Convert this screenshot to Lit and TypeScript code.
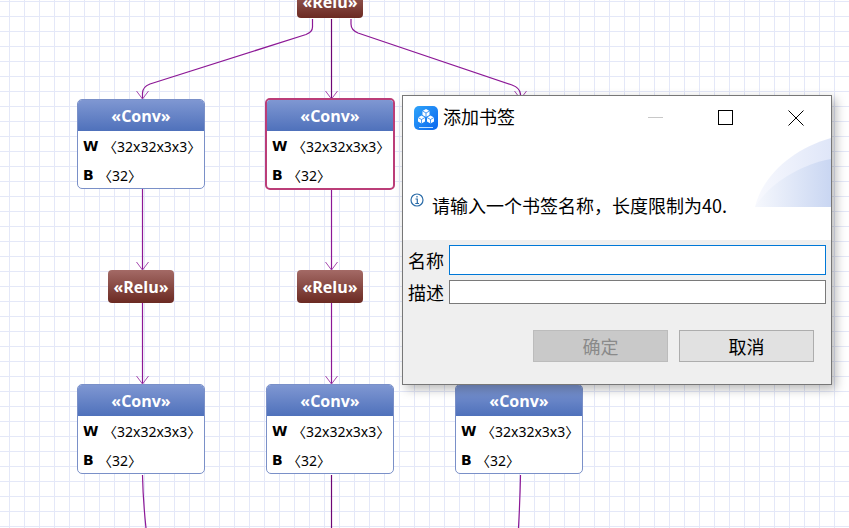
import { LitElement, html, css, svg } from "lit";
import { customElement } from "lit/decorators.js";

const convs = [
  { x: 77, y: 99, sel: false },
  { x: 266, y: 99, sel: true },
  { x: 77, y: 384, sel: false },
  { x: 266, y: 384, sel: false },
  { x: 455, y: 384, sel: false },
];
const relus = [
  { x: 297, y: -15 },
  { x: 108, y: 270 },
  { x: 297, y: 270 },
];
const edges = [
  "M312.5 19V27Q312.5 32 306 34.5L150 84Q142.5 87 142.5 93V99",
  "M351 19V24Q351 30 358 33L512 85Q520 88 520.500 94V99",
  "M142.500 189V270",
  "M142.500 303V384",
  "M331.500 303V384",
  "M331.500 189V270",
  "M142.500 475Q143 500 146 528",
  "M520.500 475Q520 500 518.500 528",
];
const darkEdges = ["M331.500 19V99", "M331.500 475V528"];
const arrows: [number, number][] = [
  [142.5, 99], [331.5, 99], [520.5, 99],
  [142.5, 270], [331.5, 270],
  [142.5, 384], [331.5, 384],
];

@customElement("app-root")
export class AppRoot extends LitElement {
  static styles = css`
    :host {
      display: block;
      position: relative;
      width: 849px;
      height: 528px;
      overflow: hidden;
      background-color: #fff;
      background-image:
        linear-gradient(to right, #e4e8f8 0 1.5px, transparent 1.5px),
        linear-gradient(to bottom, #e4e8f8 0 1.5px, transparent 1.5px);
      background-size: 15px 15px;
      background-position: 9px 1px;
      font-family: "Noto Sans CJK SC", sans-serif;
    }
    .edges { position: absolute; inset: 0; }
    .edge { fill: none; stroke: #8c1896; stroke-width: 1.200; }
    .dark { stroke: #6e0676; }
    .arrow { fill: none; stroke: #a548ae; stroke-width: 1; }
    .conv {
      position: absolute;
      box-sizing: border-box;
      width: 128px;
      height: 90px;
      border: 1px solid #7a90c8;
      border-radius: 5px;
      background: #fff;
      overflow: hidden;
    }
    .conv.sel {
      width: 130px;
      height: 92px;
      margin: -1px;
      border: 2px solid #bb3d78;
    }
    .head {
      height: 31px;
      display: flex;
      align-items: center;
      justify-content: center;
      padding-top: 1px;
      box-sizing: border-box;
      background: linear-gradient(#7f97d2, #4f71bb);
      color: #fff;
      font: bold 16px "Open Sans", "DejaVu Sans", sans-serif;
    }
    .row {
      display: flex;
      align-items: center;
      height: 29px;
      padding-left: 5px;
      color: #000;
      font: 14px "Noto Sans", "Noto Sans CJK SC", sans-serif;
    }
    .row b { font: bold 14px "DejaVu Sans", sans-serif; }
    .w { width: 20px; flex: none; }
    .b { width: 15px; flex: none; }
    .relu {
      position: absolute;
      box-sizing: border-box;
      width: 66px;
      height: 33px;
      display: flex;
      align-items: center;
      justify-content: center;
      padding-top: 1px;
      border-radius: 4px;
      background: linear-gradient(#a46a66, #6b2a22);
      color: #fff;
      font: bold 16px "Open Sans", "DejaVu Sans", sans-serif;
    }
    .dialog {
      position: absolute;
      left: 402px;
      top: 95px;
      box-sizing: border-box;
      width: 430px;
      height: 290px;
      border: 1px solid #777;
      background: #efefef;
      box-shadow: 4px 4px 10px rgba(0, 0, 0, 0.28);
      display: flex;
      flex-direction: column;
      color: #000;
      font-size: 18px;
    }
    .top {
      position: relative;
      height: 144px;
      background: #fff;
      flex: none;
      display: flex;
      flex-direction: column;
    }
    .banner { position: absolute; right: 0; top: 42px; }
    .title {
      display: flex;
      align-items: center;
      height: 44px;
      padding-left: 11px;
      gap: 5px;
      line-height: 24px;
    }
    .title span { margin-top: -4px; }
    .logo { display: block; }
    .ctrl { position: absolute; top: 14px; display: block; }
    .c1 { left: 245px; }
    .c2 { left: 315px; }
    .c3 { left: 385px; }
    .msg {
      position: relative;
      display: flex;
      align-items: center;
      margin-top: 52px;
      padding-left: 7px;
      gap: 8px;
      height: 26px;
    }
    .msg svg { margin-top: -10px; flex: none; }
    .form {
      flex: none;
      display: grid;
      grid-template-columns: 36px 377px;
      column-gap: 5px;
      row-gap: 5px;
      padding: 5px 0 0 5px;
    }
    .form label { line-height: 30px; height: 30px; }
    .form label.second { line-height: 24px; height: 24px; }
    .form input {
      box-sizing: border-box;
      margin: 0;
      padding: 0 2px;
      border: 1px solid #7a7a7a;
      background: #fff;
      outline: none;
      width: 377px;
      height: 24px;
      border-radius: 0;
    }
    .form input.focus { border-color: #0078d7; height: 30px; }
    .buttons {
      display: flex;
      justify-content: flex-end;
      gap: 11px;
      padding: 26px 17px 0 0;
    }
    .btn {
      box-sizing: border-box;
      width: 135px;
      height: 32px;
      display: flex;
      align-items: center;
      justify-content: center;
      border: 1px solid #adadad;
      background: #e1e1e1;
      font-size: 18px;
    }
    .btn.off { background: #c9c9c9; border-color: #bcbcbc; color: #8a8a8a; }
  `;

  render() {
    return html`
      <svg class="edges" width="849" height="528">
        ${edges.map((d) => svg`<path class="edge" d=${d} />`)}
        ${darkEdges.map((d) => svg`<path class="edge dark" d=${d} />`)}
        ${arrows.map(([x, y]) => svg`<path class="arrow" d="M${x - 6} ${y - 8}L${x} ${y}L${x + 6} ${y - 8}" />`)}
      </svg>
      ${convs.map(
        (n) => html`
          <div class="conv ${n.sel ? "sel" : ""}" style="left:${n.x}px;top:${n.y}px">
            <div class="head">«Conv»</div>
            <div class="row"><b class="w">W</b><span>〈32x32x3x3〉</span></div>
            <div class="row"><b class="b">B</b><span>〈32〉</span></div>
          </div>
        `
      )}
      ${relus.map((n) => html`<div class="relu" style="left:${n.x}px;top:${n.y}px">«Relu»</div>`)}
      <div class="dialog">
        <div class="top">
          <svg class="banner" width="76" height="69" viewBox="0 0 76 69">
            <defs>
              <linearGradient id="bg1" x1="0" x2="1" y1="0" y2="0">
                <stop offset="0" stop-color="#f8f9fe" />
                <stop offset="1" stop-color="#dfe6f8" />
              </linearGradient>
              <linearGradient id="bg2" x1="0" x2="1" y1="0" y2="0">
                <stop offset="0" stop-color="#f6f8fd" />
                <stop offset="1" stop-color="#c9d6f2" />
              </linearGradient>
            </defs>
            <path d="M0 69C8 36 40 10 76 0V69Z" fill="url(#bg1)" />
            <path d="M0 69C14 46 44 27 76 21V69Z" fill="url(#bg2)" />
          </svg>
          <div class="title">
            <svg class="logo" width="24" height="24" viewBox="0 0 24 24">
              <defs>
                <linearGradient id="lg" x1="0" x2="1" y1="0" y2="1">
                  <stop offset="0" stop-color="#2fa4fa" />
                  <stop offset="1" stop-color="#0a66ee" />
                </linearGradient>
              </defs>
              <rect width="24" height="24" rx="5" fill="url(#lg)" />
              <path d="M12 3l3.500 2v4l-3.500 2-3.500-2V5z" fill="#fff" />
              <path d="M7.500 9.500l3.500 2v4l-3.500 2-3.500-2v-4z" fill="#fff" />
              <path d="M16.500 9.500l3.500 2v4l-3.500 2-3.500-2v-4z" fill="#fff" />
              <path d="M8.500 5l3.500 2 3.500-2M12 7v4M4 11.500l3.500 2 3.500-2M7.500 13.500v4M13 11.500l3.500 2 3.500-2M16.500 13.500v4" fill="none" stroke="#1d80f2" stroke-width="0.800" />
              <path d="M5 21.500H19" stroke="#bfe0ff" stroke-width="1" />
            </svg>
            <span>添加书签</span>
          </div>
          <svg class="ctrl c1" width="16" height="16" viewBox="0 0 16 16"><path d="M0 7.500H15" stroke="#c8c8c8" /></svg>
          <svg class="ctrl c2" width="16" height="16" viewBox="0 0 16 16"><rect x="0.500" y="0.500" width="14" height="14" fill="none" stroke="#000" /></svg>
          <svg class="ctrl c3" width="16" height="16" viewBox="0 0 16 16"><path d="M0.500 0.500L15.500 15.500M15.500 0.500L0.500 15.500" stroke="#000" /></svg>
          <div class="msg">
            <svg width="14" height="14" viewBox="0 0 14 14">
              <circle cx="7" cy="7" r="6" fill="none" stroke="#2b6ca8" stroke-width="1.200" />
              <path d="M7 3v1.500M5.500 6H7.300V10.500M5.300 10.500H9" fill="none" stroke="#2b6ca8" stroke-width="1.200" />
            </svg>
            <span>请输入一个书签名称，长度限制为40.</span>
          </div>
        </div>
        <div class="form">
          <label>名称</label><input class="focus" />
          <label class="second">描述</label><input />
        </div>
        <div class="buttons">
          <div class="btn off">确定</div>
          <div class="btn">取消</div>
        </div>
      </div>
    `;
  }
}
